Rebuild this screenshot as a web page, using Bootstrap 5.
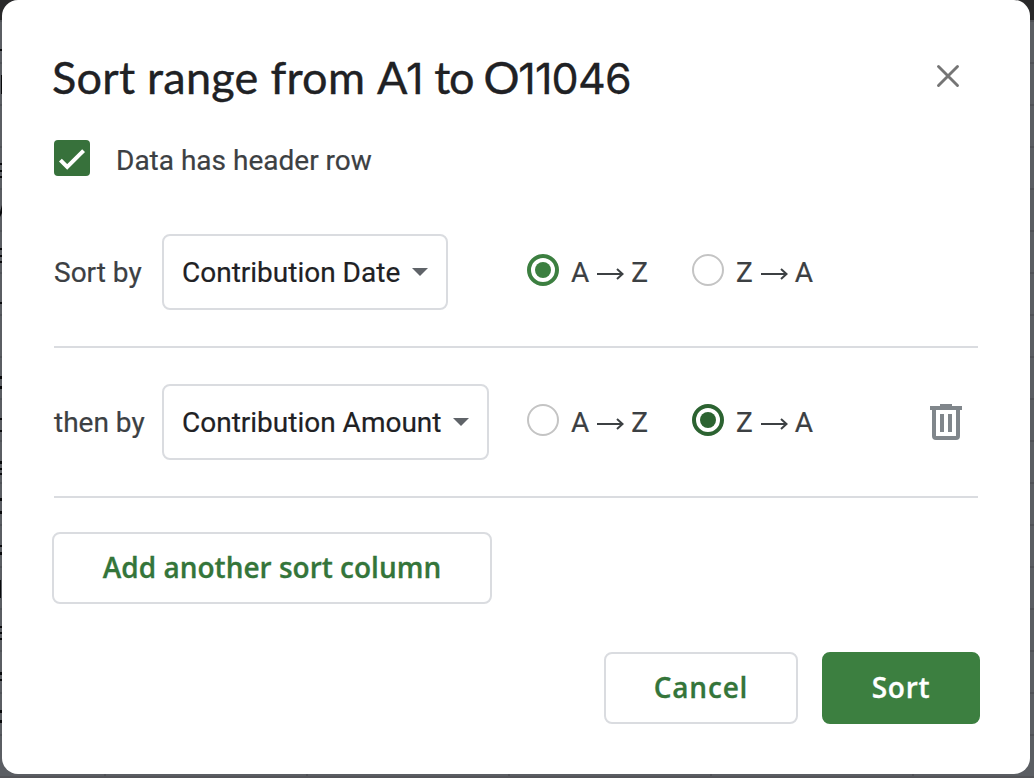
<!DOCTYPE html>
<html lang="en">
<head>
<meta charset="utf-8">
<meta name="viewport" content="width=device-width, initial-scale=1">
<title>Sort range</title>
<link href="https://cdn.jsdelivr.net/npm/bootstrap@5.3.0/dist/css/bootstrap.min.css" rel="stylesheet">
<style>
  body {
    height: 778px; overflow: hidden; padding: 0 4px 4px 2px;
    font-family: Roboto, "Liberation Sans", sans-serif; font-size: 28px; line-height: 36px; color: #3c4043;
    /* dimmed spreadsheet behind the dialog */
    background:
      linear-gradient(#29292a, #29292a) 0 0 / 100% 20px no-repeat,
      repeating-linear-gradient(90deg, transparent 0 104px, #505257 104px 106px, transparent 106px 202px) 0 774px / 100% 2px no-repeat,
      linear-gradient(#545559, #545559) 0 776px / 100% 2px no-repeat,
      repeating-linear-gradient(#505257 0 2px, #5b5e63 2px 42px) 0 20px / 100% 100% no-repeat;
  }
  .sheet-edge { left: 0; top: 0; width: 2px; height: 778px; }
  .dialog-box { height: 774px; border: 0; border-radius: 16px; padding: 50px; }
  .dialog-title { font-family: Lato, sans-serif; font-size: 45px; line-height: 54px; height: 54px; color: #202124; white-space: nowrap; -webkit-text-stroke: .4px #202124; }
  .wide { letter-spacing: .25px; }
  .tight { letter-spacing: -1.3px; }
  .digits { font-family: Inter, sans-serif; font-size: 43px; letter-spacing: -.8px; -webkit-text-stroke: .3px #202124; }
  .close-btn { width: 24px; height: 24px; margin: 14px 20px 0 0; color: #757575; }
  .header-check { margin: 36px 0 0 2px; gap: 26px; height: 36px; -webkit-text-stroke: .2px; }
  .header-check span { padding-top: 5px; }
  .rows { margin-top: 22px; -webkit-text-stroke: .2px; }
  .sort-row { height: 150px; margin: 0 2px; border-bottom: 2px solid #dadce0; }
  .row-name { width: 108px; padding-top: 2px; }
  .column-pick { height: 76px; border: 2px solid #dadce0; border-radius: 8px; padding: 0 18px; gap: 12px; color: #202124; font-size: 28px; background: #fff; }
  .column-pick span { padding-top: 2px; }
  .pick-wrap { width: 365px; }
  .choice { width: 165px; gap: 12px; }
  .choice > svg { margin-top: -4px; }
  .dir { gap: 7px; padding-top: 2px; }
  .arrow { margin: 2px 0 0 1px; }
  .dlg-btn { height: 72px; border: 2px solid #dadce0; border-radius: 8px; color: #34753a; background: #fff;
    font-family: "Open Sans", sans-serif; font-size: 28px; font-weight: 600; line-height: 36px; padding: 0 0 2px; -webkit-text-stroke: .3px; }
  .btn-add { width: 440px; }
  .btn-cancel { width: 194px; letter-spacing: .8px; }
  .btn-sort { width: 158px; letter-spacing: .7px; background: #3c7f40; border-color: #3c7f40; color: #fff; }
</style>
</head>
<body class="position-relative">
<svg class="sheet-edge position-absolute" aria-hidden="true" fill="#08090b">
  <path d="M0 49h2v2H0zM1 75h1v19H1zM0 163h2v2H0zM0 170h2v2H0zM0 176h2v2H0zM0 212l2-7v8l-2 4zM0 248h2v2H0zM0 255h2v2H0zM0 261h2v2H0zM0 302h2v2H0zM0 376h2v3H0zM0 386h2v3H0zM0 418h2v2H0zM0 430h2v2H0zM0 461h2v3H0zM0 468h2v2H0zM0 473h2v2H0zM0 498h2v3H0zM0 511h2v3H0zM0 545h2v2H0zM0 552h2v3H0zM0 580h1v18H0zM0 626h2v2H0zM0 632h2v2H0zM0 638h2v2H0zM0 672h2v3H0zM0 679h2v2H0zM0 710h2v3H0zM0 720h2v3H0z"/>
</svg>
<main class="card dialog-box">
  <div class="d-flex justify-content-between">
    <h1 class="dialog-title fw-normal m-0"><span class="wide">Sort range from </span><span class="tight">A</span><span class="digits">1</span> <span class="tight">to O</span><span class="digits">11046</span></h1>
    <button class="close-btn btn p-0 border-0 d-flex" aria-label="Close">
      <svg width="24" height="24" viewBox="0 0 24 24" fill="none" stroke="currentColor" stroke-width="2.9" stroke-linecap="round"><path d="M2.5 2.5l19 19M21.5 2.5l-19 19"/></svg>
    </button>
  </div>
  <div class="header-check d-flex align-items-center">
    <svg width="36" height="36" viewBox="0 0 36 36"><rect width="36" height="36" rx="4" fill="#37713b"/><path d="M6.4 20.2l6.8 6.8L29.6 10.7" fill="none" stroke="#fff" stroke-width="4"/></svg>
    <span>Data has header row</span>
  </div>
  <div class="rows">
    <div class="sort-row d-flex align-items-center">
      <span class="row-name">Sort by</span>
      <div class="pick-wrap">
        <button class="column-pick btn d-flex align-items-center"><span>Contribution Date</span>
          <svg width="16" height="8"><path d="M0 0h16L8 8z" fill="#5f6368"/></svg></button>
      </div>
      <label class="choice d-flex align-items-center">
        <svg width="32" height="32"><circle cx="16" cy="16" r="14" fill="none" stroke="#3c7f40" stroke-width="4"/><circle cx="16" cy="16" r="8" fill="#3c7f40"/></svg>
        <span class="dir d-flex align-items-center"><span>A</span><svg class="arrow" width="27" height="12" viewBox="0 0 27 12"><path d="M0 6h25M20 1l5.5 5L20 11" fill="none" stroke="#3c4043" stroke-width="2"/></svg><span>Z</span></span>
      </label>
      <label class="choice d-flex align-items-center">
        <svg width="32" height="32"><circle cx="16" cy="16" r="15" fill="none" stroke="#c4c4c4" stroke-width="2"/></svg>
        <span class="dir d-flex align-items-center"><span>Z</span><svg class="arrow" width="27" height="12" viewBox="0 0 27 12"><path d="M0 6h25M20 1l5.5 5L20 11" fill="none" stroke="#3c4043" stroke-width="2"/></svg><span>A</span></span>
      </label>
    </div>
    <div class="sort-row d-flex align-items-center">
      <span class="row-name">then by</span>
      <div class="pick-wrap">
        <button class="column-pick btn d-flex align-items-center"><span>Contribution Amount</span>
          <svg width="16" height="8"><path d="M0 0h16L8 8z" fill="#5f6368"/></svg></button>
      </div>
      <label class="choice d-flex align-items-center">
        <svg width="32" height="32"><circle cx="16" cy="16" r="15" fill="none" stroke="#c4c4c4" stroke-width="2"/></svg>
        <span class="dir d-flex align-items-center"><span>A</span><svg class="arrow" width="27" height="12" viewBox="0 0 27 12"><path d="M0 6h25M20 1l5.5 5L20 11" fill="none" stroke="#3c4043" stroke-width="2"/></svg><span>Z</span></span>
      </label>
      <label class="choice d-flex align-items-center">
        <svg width="32" height="32"><circle cx="16" cy="16" r="14" fill="none" stroke="#2c6331" stroke-width="4"/><circle cx="16" cy="16" r="8" fill="#2c6331"/></svg>
        <span class="dir d-flex align-items-center"><span>Z</span><svg class="arrow" width="27" height="12" viewBox="0 0 27 12"><path d="M0 6h25M20 1l5.5 5L20 11" fill="none" stroke="#3c4043" stroke-width="2"/></svg><span>A</span></span>
      </label>
      <button class="btn p-0 border-0 d-flex ms-auto me-3" aria-label="Delete">
        <svg width="32" height="36" viewBox="0 0 32 36" fill="#80868b"><path fill-rule="evenodd" d="M10 0h12v2h10v4h-2v26a4 4 0 0 1-4 4H6a4 4 0 0 1-4-4V6H0V2h10zM6 6v26h20V6z"/><path d="M10 10h4v18h-4zM18 10h4v18h-4z"/></svg>
      </button>
    </div>
  </div>
  <div class="d-flex" style="margin-top: 34px"><button class="btn dlg-btn btn-add">Add another sort column</button></div>
  <div class="d-flex justify-content-end mt-5" style="gap: 24px">
    <button class="btn dlg-btn btn-cancel">Cancel</button>
    <button class="btn dlg-btn btn-sort">Sort</button>
  </div>
</main>
<script src="https://cdn.jsdelivr.net/npm/bootstrap@5.3.0/dist/js/bootstrap.bundle.min.js"></script>
</body>
</html>
